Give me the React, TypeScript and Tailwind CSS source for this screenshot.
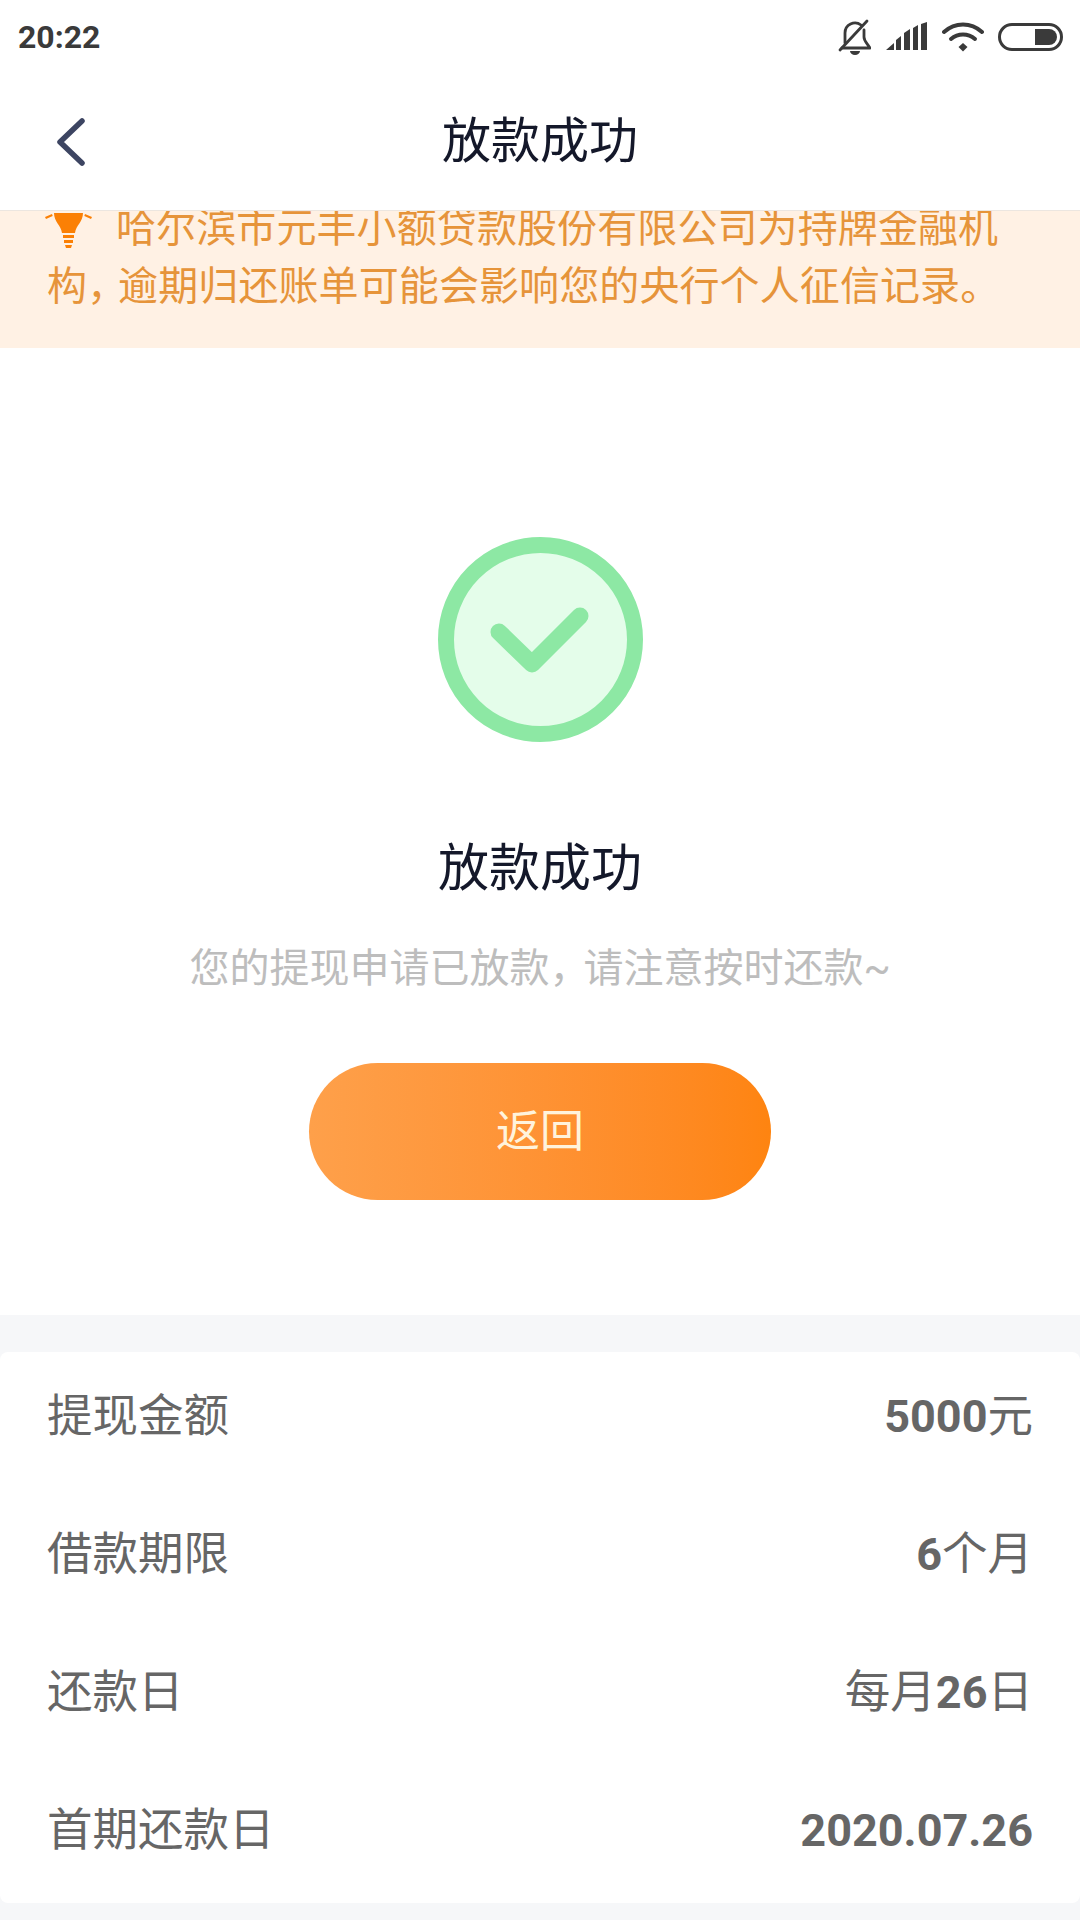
const font = "font-['Roboto','Noto_Sans_CJK_SC',sans-serif]";

function Row({ label, children }: { label: string; children: React.ReactNode }) {
  return (
    <div className="flex h-[138px] items-center justify-between pb-[8px] text-[45.5px] text-[#666666]">
      <span>{label}</span>
      <span>{children}</span>
    </div>
  );
}

function Num({ children }: { children: React.ReactNode }) {
  return <span className="text-[45px] font-bold">{children}</span>;
}

export default function App() {
  return (
    <div className={`flex h-[1920px] w-[1080px] flex-col overflow-hidden bg-[#f6f7f9] ${font}`}>
      <div className="flex h-[210px] flex-col bg-white">
        <div className="flex h-[73px] items-center justify-between pl-[18px] pr-[17px]">
          <span className="text-[32px] font-bold text-[#3a3a3a]">20:22</span>
          <div className="flex items-center gap-[14px]">
            <svg className="mr-[1px]" width="33" height="36" viewBox="0 0 33 36" fill="none" stroke="#3a3a3a" strokeWidth="2.8" strokeLinecap="round" strokeLinejoin="round">
              <path d="M7 24V14a10 10 0 0 1 16-8" />
              <path d="M26 11v7c0 4 3 6 6 11H4" />
              <path d="M2 31 29 2" />
              <path d="M12 32h10a5 4 0 0 1-10 0Z" fill="#3a3a3a" stroke="none" />
            </svg>
            <svg width="42" height="30" viewBox="0 0 42 30" fill="#3a3a3a">
              <path d="M0 28 8 21v7ZM10 18l5-4v14h-5ZM18 11l6-4v21h-6ZM27 6l5-3v25h-5ZM35 2l6-2v28h-6Z" />
            </svg>
            <svg width="42" height="30" viewBox="0 0 42 30" fill="none" stroke="#3a3a3a" strokeWidth="4" strokeLinecap="round">
              <path d="M2 10c11-10 27-10 38 0" />
              <path d="M9 17c7-6 17-6 24 0" />
              <path d="M21 21l4.500 4-4.500 4.500-4.500-4.500Z" fill="#3a3a3a" stroke="none" />
            </svg>
            <svg width="65" height="28" viewBox="0 0 65 28" fill="none">
              <rect x="1.5" y="1.5" width="62" height="25" rx="12.5" stroke="#3a3a3a" strokeWidth="3" />
              <path d="M37 6h14a8 8 0 0 1 0 16H37Z" fill="#3a3a3a" />
            </svg>
          </div>
        </div>
        <div className="flex h-[137px] items-center">
          <svg className="ml-[56px]" width="30" height="48" viewBox="0 0 30 48" fill="none" stroke="#3d4562" strokeWidth="5.500" strokeLinecap="round" strokeLinejoin="round">
            <path d="M26 3 4 24l22 21" />
          </svg>
          <span className="ml-[356px] text-[49px] text-[#14182a]">放款成功</span>
        </div>
      </div>

      <div className="h-[138px] overflow-hidden border-t border-[#ece6e0] bg-[#fff1e4] pl-[47px] text-[40px] leading-[58px] tracking-[0.1px] text-[#e6943a]">
        <div className="-mt-[11px] flex items-center whitespace-nowrap">
          <svg className="mr-[24px] -ml-[2px] shrink-0" width="47" height="42" viewBox="0 0 47 42" fill="#fb8005">
            <path d="M9 5h29c0 9-7 12-8 20H17C16 17 9 14 9 5Z" />
            <path d="M18 27h11v3H18ZM19 32h9v3H19ZM20 37h7l-1 3h-5Z" />
            <path d="M0 9l7-3 .7 2-6.700 3ZM47 9l-7-3-.7 2 6.700 3Z" />
          </svg>
          <span>哈尔滨市元丰小额贷款股份有限公司为持牌金融机</span>
        </div>
        <div className="whitespace-nowrap">
          构<span className="tracking-[-9px]">，</span>逾期归还账单可能会影响您的央行个人征信记录。
        </div>
      </div>

      <div className="flex h-[967px] flex-col items-center bg-white pt-[189px]">
        <div className="flex h-[205px] w-[205px] items-center justify-center rounded-full border-[16px] border-[#8de8a4] bg-[#e4fdea]">
          <svg width="100" height="72" viewBox="0 0 100 72" fill="none" stroke="#8de8a4" strokeWidth="17" strokeLinecap="round" strokeLinejoin="round">
            <path d="M9 28l33 32L90 12" />
          </svg>
        </div>
        <div className="mt-[90px] text-[51px] leading-[74px] text-[#14182a]">放款成功</div>
        <div className="mt-[34px] text-[40px] leading-[58px] text-[#bdbdbd]">
          您的提现申请已放款<span className="tracking-[-6px]">，</span>请注意按时还款~
        </div>
        <div className="mt-[65px] flex h-[137px] w-[462px] items-center justify-center rounded-full bg-gradient-to-r from-[#fea04a] to-[#fe8410] text-[44px] text-[#fff3dc]">
          返回
        </div>
      </div>

      <div className="mt-[37px] h-[551px] rounded-[8px] bg-white px-[47px]">
        <Row label="提现金额"><Num>5000</Num>元</Row>
        <Row label="借款期限"><Num>6</Num>个月</Row>
        <Row label="还款日">每月<Num>26</Num>日</Row>
        <Row label="首期还款日"><Num>2020.07.26</Num></Row>
      </div>
    </div>
  );
}
